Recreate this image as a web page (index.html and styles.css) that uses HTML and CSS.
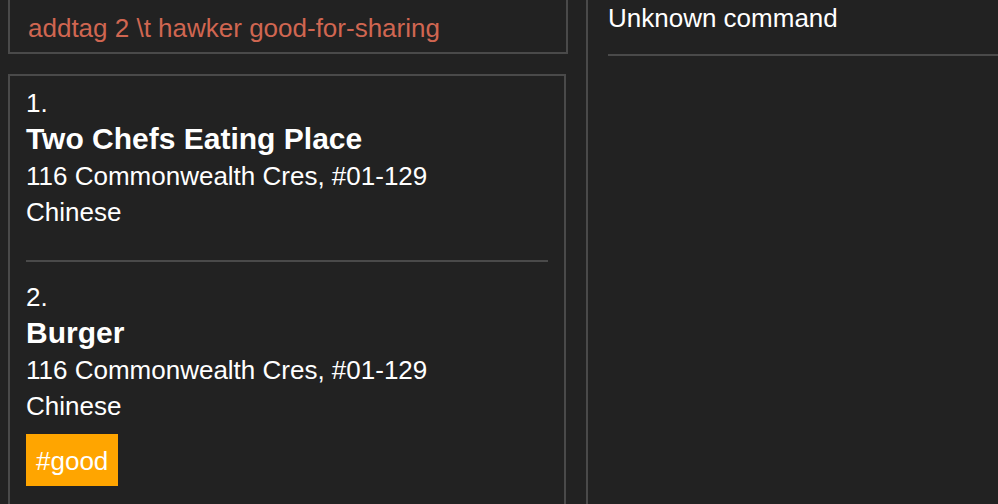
FILE: index.html
```html
<!DOCTYPE html>
<html>
<head>
<meta charset="utf-8">
<link rel="stylesheet" href="styles.css">
</head>
<body>
<div class="app">
  <div class="left">
    <div class="command-box">addtag 2 \t hawker good-for-sharing</div>
    <div class="list">
      <div class="card first">
        <div class="num">1.</div>
        <div class="name">Two Chefs Eating Place</div>
        <div class="addr">116 Commonwealth Cres, #01-129</div>
        <div class="cuisine">Chinese</div>
      </div>
      <div class="card second">
        <div class="num">2.</div>
        <div class="name">Burger</div>
        <div class="addr">116 Commonwealth Cres, #01-129</div>
        <div class="cuisine">Chinese</div>
        <div class="tags"><span class="tag">#good</span></div>
      </div>
    </div>
  </div>
  <div class="divider"></div>
  <div class="right">
    <div class="result">Unknown command</div>
    <div class="rule"></div>
  </div>
</div>
</body>
</html>
```
FILE: styles.css
```css
html, body {
  margin: 0;
  padding: 0;
  background: #222222;
  height: 100%;
  overflow: hidden;
}
body {
  font-family: "Liberation Sans", Arial, sans-serif;
  color: #ffffff;
}
.app {
  display: flex;
  height: 504px;
}
.left {
  width: 578px;
  padding-left: 8px;
  flex: none;
}
.divider {
  width: 2px;
  background: #4a4a4a;
  flex: none;
}
.right {
  flex: 1;
  padding-left: 20px;
}
.command-box {
  width: 538px;
  border: 2px solid #4a4a4a;
  border-top: none;
  padding: 13px 0 9px 18px;
  font-size: 26px;
  line-height: 30px;
  color: #d06651;
  white-space: nowrap;
}
.list {
  margin-top: 20px;
  width: 522px;
  border: 2px solid #4a4a4a;
  border-bottom: none;
  padding: 0 16px;
  height: 440px;
}
.card {
  font-size: 26px;
}
.card.first {
  padding: 10px 0 30px;
  border-bottom: 2px solid #4a4a4a;
}
.card.second {
  padding-top: 18px;
}
.num {
  line-height: 34px;
}
.name {
  font-size: 30px;
  font-weight: bold;
  line-height: 38px;
}
.addr, .cuisine {
  line-height: 36px;
}
.tags {
  display: flex;
  margin-top: 10px;
}
.tag {
  background: #ffa500;
  color: #fff;
  padding: 12px 10px 10px;
  line-height: 30px;
}
.result {
  font-size: 26px;
  line-height: 30px;
  padding-top: 3px;
  height: 51px;
}
.rule {
  height: 2px;
  background: #4a4a4a;
}
```
